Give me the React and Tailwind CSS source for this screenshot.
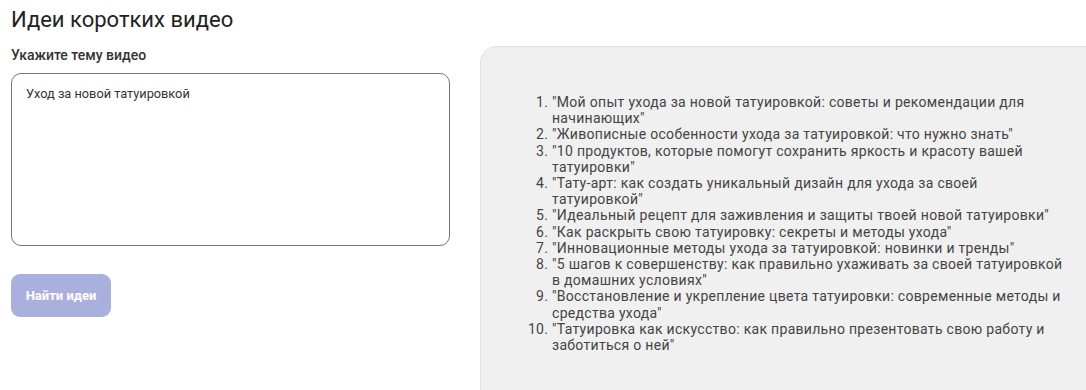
import React from "react";

const ideas = [
  ['"Мой опыт ухода за новой татуировкой: советы и рекомендации для', 'начинающих"'],
  ['"Живописные особенности ухода за татуировкой: что нужно знать"'],
  ['"10 продуктов, которые помогут сохранить яркость и красоту вашей', 'татуировки"'],
  ['"Тату-арт: как создать уникальный дизайн для ухода за своей', 'татуировкой"'],
  ['"Идеальный рецепт для заживления и защиты твоей новой татуировки"'],
  ['"Как раскрыть свою татуировку: секреты и методы ухода"'],
  ['"Инновационные методы ухода за татуировкой: новинки и тренды"'],
  ['"5 шагов к совершенству: как правильно ухаживать за своей татуировкой', 'в домашних условиях"'],
  ['"Восстановление и укрепление цвета татуировки: современные методы и', 'средства ухода"'],
  ['"Татуировка как искусство: как правильно презентовать свою работу и', 'заботиться о ней"'],
];

export default function App() {
  return (
    <div
      className="w-[1086px] h-[390px] overflow-hidden bg-white text-[#222]"
      style={{ fontFamily: "Roboto, 'Noto Sans', sans-serif" }}
    >
      <div className="pl-[11px] pt-[4px]">
        <h1 className="text-[22px] leading-[32px] font-normal text-[#222]">Идеи коротких видео</h1>
      </div>
      <div className="flex pl-[11px] pt-[10px] gap-[30px]">
        <div className="w-[439px] shrink-0">
          <div className="text-[14px] leading-[18px] font-medium text-[#333]">Укажите тему видео</div>
          <div className="mt-[9px] h-[173px] rounded-[10px] border border-[#777] px-[14px] py-[12px] text-[12.75px] leading-[16px] text-[#333]">
            Уход за новой татуировкой
          </div>
          <button className="mt-[28px] w-[100px] h-[43px] rounded-[9px] bg-[#a9b0dd] text-white text-[13px] font-bold">
            Найти идеи
          </button>
        </div>
        <div className="w-[640px] shrink-0 h-[400px] rounded-tl-[16px] border border-[#e2e2e2] bg-[#f0f0f0] pl-[30px] pt-[47px]">
          <ol className="list-decimal pl-[41px] w-[580px] text-[14px] tracking-[0.3px] leading-[16.2px] text-[#444] whitespace-nowrap">
            {ideas.map((lines, i) => (
              <li key={i}>
                {lines.map((l, j) => (
                  <React.Fragment key={j}>
                    {j > 0 && <br />}
                    {l}
                  </React.Fragment>
                ))}
              </li>
            ))}
          </ol>
        </div>
      </div>
    </div>
  );
}
